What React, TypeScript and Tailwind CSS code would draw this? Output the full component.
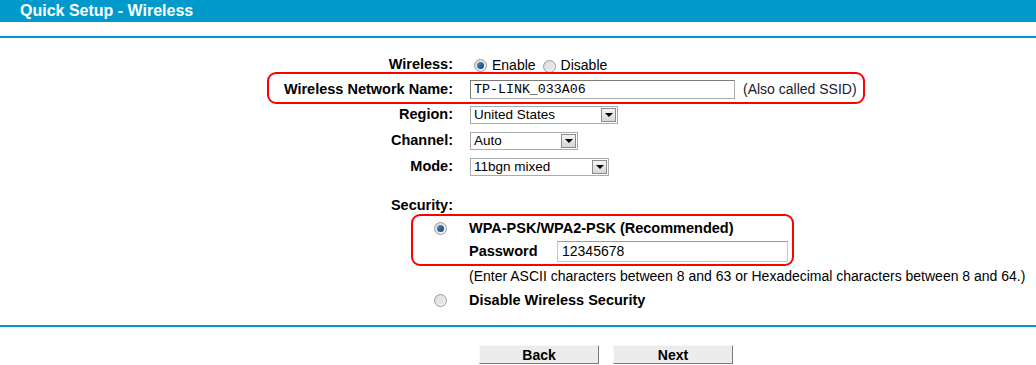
import React from "react";

const font = { fontFamily: '"Liberation Sans", Arial, sans-serif' };

function Radio({ checked }: { checked?: boolean }) {
  return (
    <span className="inline-flex h-[13px] w-[13px] items-center justify-center rounded-full border border-[#9a9a9a] bg-gradient-to-br from-[#d8d8d8] to-[#f8f8f8]">
      {checked ? (
        <span className="h-[7px] w-[7px] rounded-full bg-gradient-to-br from-[#5d8fbf] to-[#0e3c6b]" />
      ) : (
        <span className="h-[7px] w-[7px] rounded-full bg-[#e4e4e4]" />
      )}
    </span>
  );
}

function Select({ value, width }: { value: string; width: string }) {
  return (
    <div className={`flex h-[18px] items-center justify-between border border-[#a5acb2] bg-white pl-[3px] pr-[1px] ${width}`}>
      <span className="text-[13.5px] leading-none text-black">{value}</span>
      <span className="flex h-[14px] w-[15px] items-center justify-center border border-[#8c8c8c] bg-gradient-to-b from-[#f4f4f4] to-[#d6d6d6]">
        <span className="h-0 w-0 border-x-[4px] border-t-[4px] border-x-transparent border-t-black" />
      </span>
    </div>
  );
}

export default function App() {
  return (
    <div className="relative h-[365px] w-[1036px] overflow-hidden bg-white text-black" style={font}>
      <div className="flex h-[22px] items-center bg-[#0099cc] pl-[20px]">
        <span className="text-[16px] font-bold leading-none text-white">Quick Setup - Wireless</span>
      </div>
      <div className="mt-[14px] h-[2px] bg-[#0099cc]" />

      <div className="pt-[15px] text-[14px]">
        <div className="flex h-[24px] items-center">
          <div className="w-[453px] text-right text-[14.5px] font-bold">Wireless:</div>
          <div className="ml-[21px] flex items-center">
            <Radio checked />
            <span className="ml-[5px]">Enable</span>
            <span className="ml-[7px]"><Radio /></span>
            <span className="ml-[5px]">Disable</span>
          </div>
        </div>
        <div className="flex h-[25px] items-center">
          <div className="w-[453px] text-right text-[14.5px] font-bold">Wireless Network Name:</div>
          <div className="ml-[17px] flex h-[19px] w-[265px] items-center border border-[#a9a9a9] border-t-[#7a7a7a] border-l-[#7a7a7a] pl-[3px]">
            <span className="text-[13.3px]" style={{ fontFamily: '"Liberation Mono", "Courier New", monospace' }}>TP-LINK_033A06</span>
          </div>
          <span className="ml-[8px] text-[#1a1a2e]">(Also called SSID)</span>
        </div>
        <div className="flex h-[26px] items-center">
          <div className="w-[453px] text-right text-[14.5px] font-bold">Region:</div>
          <div className="ml-[17px]"><Select value="United States" width="w-[148px]" /></div>
        </div>
        <div className="flex h-[26px] items-center">
          <div className="w-[453px] text-right text-[14.5px] font-bold">Channel:</div>
          <div className="ml-[17px]"><Select value="Auto" width="w-[108px]" /></div>
        </div>
        <div className="flex h-[26px] items-center">
          <div className="w-[453px] text-right text-[14.5px] font-bold">Mode:</div>
          <div className="ml-[17px]"><Select value="11bgn mixed" width="w-[139px]" /></div>
        </div>

        <div className="mt-[14px] flex h-[24px] items-center">
          <div className="w-[453px] text-right text-[14.5px] font-bold">Security:</div>
        </div>
        <div className="flex h-[21px] items-center">
          <div className="flex w-[453px] justify-end pr-[6px]"><Radio checked /></div>
          <div className="ml-[16px] text-[14.5px] font-bold">WPA-PSK/WPA2-PSK (Recommended)</div>
        </div>
        <div className="flex h-[25px] items-center">
          <div className="w-[453px]" />
          <div className="ml-[16px] w-[88px] text-[14.5px] font-bold">Password</div>
          <div className="flex h-[21px] w-[231px] items-center border border-[#c8c8c8] border-t-[#9a9a9a] pl-[4px]">12345678</div>
        </div>
        <div className="flex h-[24px] items-center">
          <div className="w-[453px]" />
          <div className="ml-[16px] whitespace-nowrap">(Enter ASCII characters between 8 and 63 or Hexadecimal characters between 8 and 64.)</div>
        </div>
        <div className="flex h-[25px] items-center">
          <div className="flex w-[453px] justify-end pr-[6px]"><Radio /></div>
          <div className="ml-[16px] text-[14.5px] font-bold">Disable Wireless Security</div>
        </div>
      </div>

      <div className="mt-[12px] h-[2px] bg-[#0099cc]" />

      <div className="mt-[18px] flex">
        <div className="w-[479px]" />
        <button className="h-[19px] w-[120px] border border-[#f8f8f8] border-b-[#7a7a7a] border-r-[#7a7a7a] bg-[#ececec] text-[14px] font-bold leading-none">Back</button>
        <button className="ml-[14px] h-[19px] w-[120px] border border-[#f8f8f8] border-b-[#7a7a7a] border-r-[#7a7a7a] bg-[#ececec] text-[14px] font-bold leading-none">Next</button>
      </div>

      <div className="pointer-events-none absolute left-[267px] top-[72px] h-[32px] w-[598px] rounded-[9px] border-2 border-[#ff0000]" />
      <div className="pointer-events-none absolute left-[411px] top-[214px] h-[52px] w-[383px] rounded-[9px] border-2 border-[#ff0000]" />
    </div>
  );
}
